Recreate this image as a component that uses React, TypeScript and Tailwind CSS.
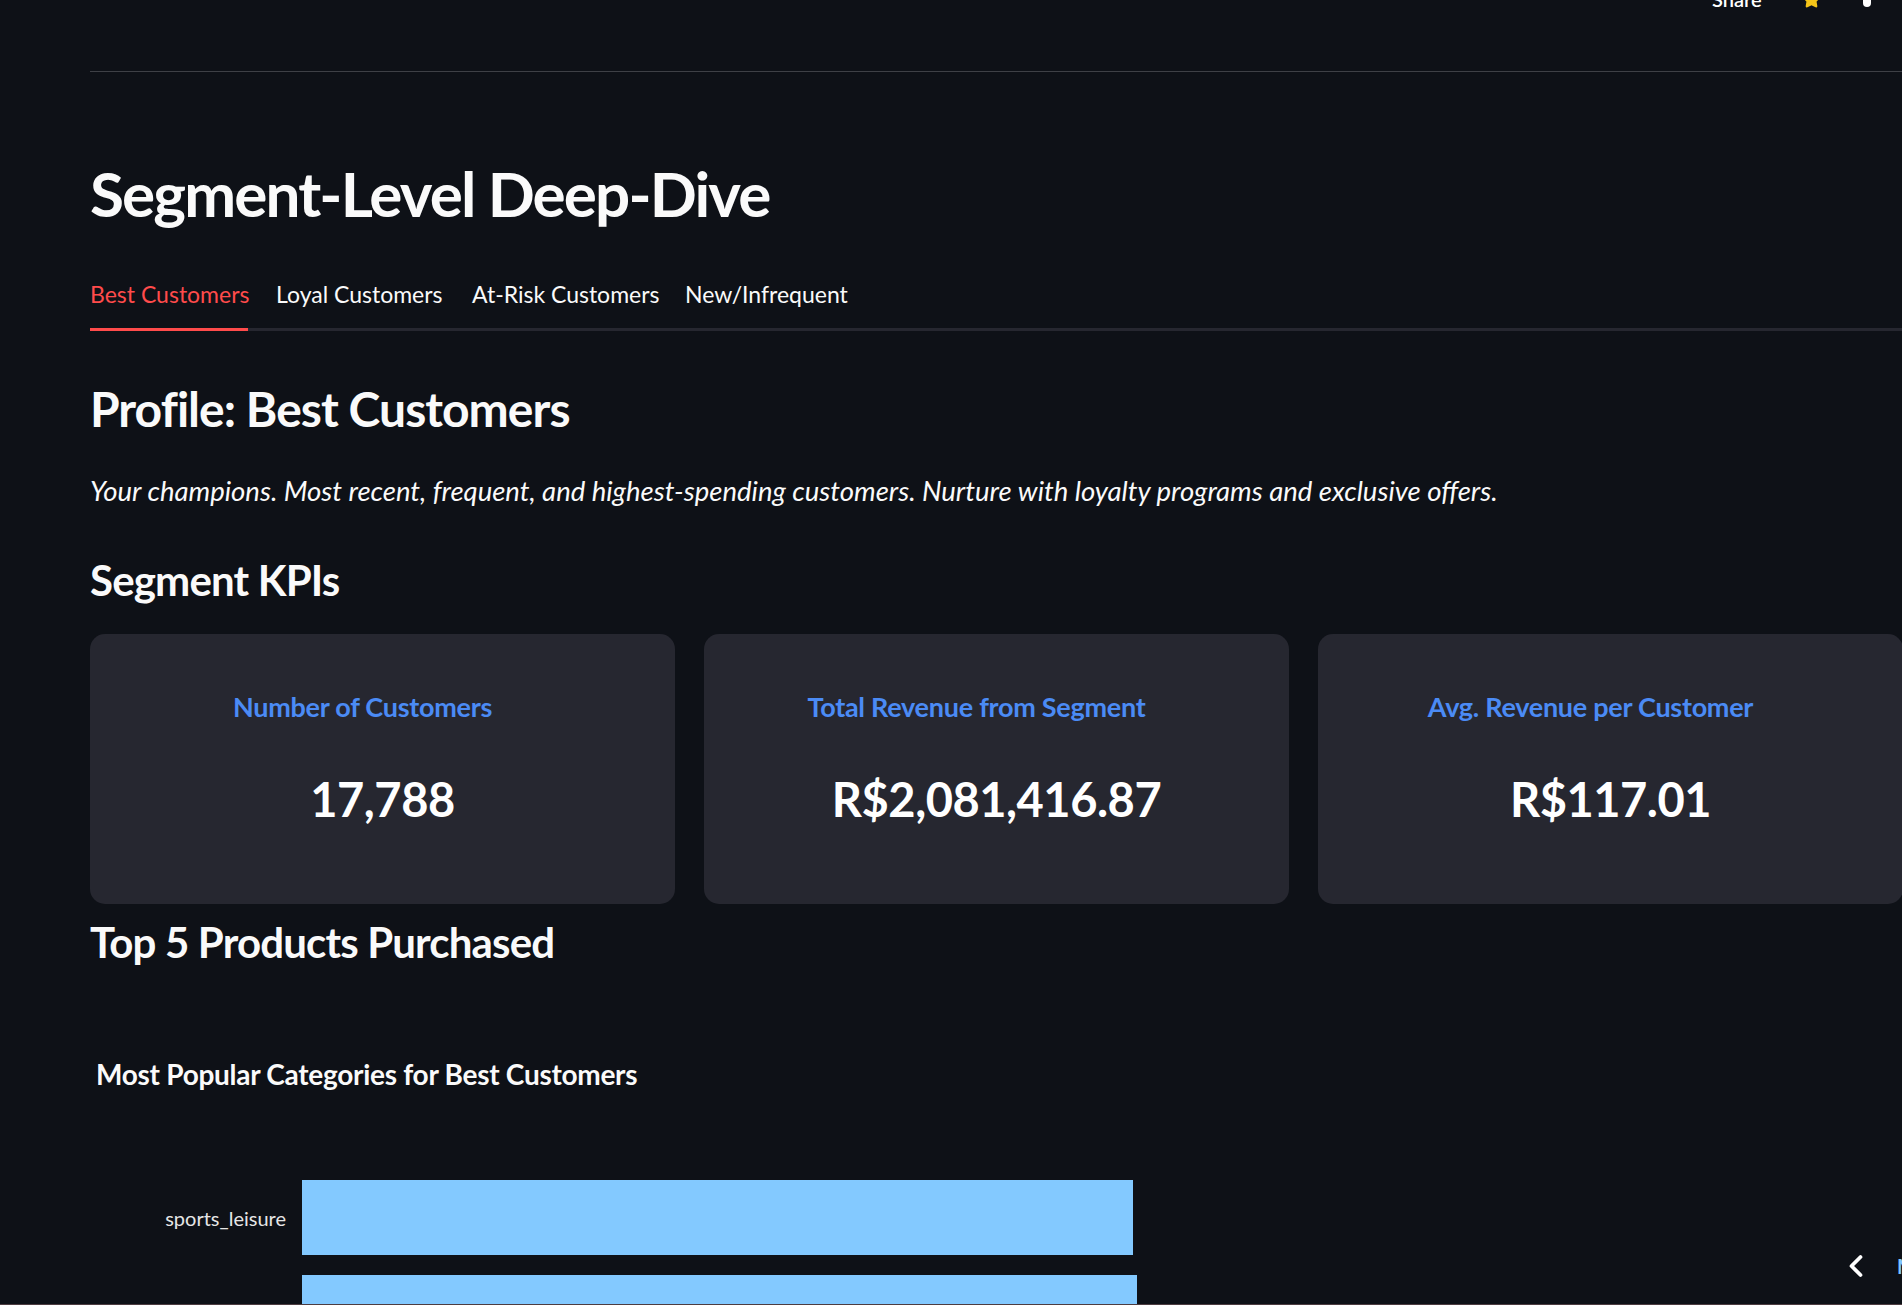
import { ChevronLeft, Star } from "lucide-react"

const tabs = [
	{ label: "Best Customers", w: "w-[157px]" },
	{ label: "Loyal Customers", w: "w-[167px]" },
	{ label: "At-Risk Customers", w: "w-[184px]" },
	{ label: "New/Infrequent", w: "w-[162px]" }
]

const kpis = [
	{ label: "Number of Customers", value: "17,788" },
	{ label: "Total Revenue from Segment", value: "R$2,081,416.87" },
	{ label: "Avg. Revenue per Customer", value: "R$117.01" }
]

const bars = [
	{ name: "sports_leisure", w: "w-[831px]" },
	{ name: "", w: "w-[835px]" }
]

function KpiCard({ label, value }: { label: string; value: string }) {
	return (
		<div className="h-[270px] w-[585px] shrink-0 rounded-[15px] bg-[#262730] flex flex-col items-center">
			<div className="mt-[56px] pr-[40px] text-[27px] leading-[34px] font-bold text-[#4b8bf5] tracking-[-0.01em]">
				{label}
			</div>
			<div className="mt-[45px] text-[47px] leading-[60px] font-bold text-white tracking-[-0.01em]">{value}</div>
		</div>
	)
}

export default function App() {
	return (
		<div className="relative w-[1902px] h-[1305px] overflow-hidden bg-[#0e1117] text-[#fafafa] font-['Lato',sans-serif]">
			{/* toolbar, scrolled mostly out of view */}
			<div className="absolute -top-[16px] left-[1712px] flex items-center">
				<span className="text-[20px] font-semibold text-white">Share</span>
				<Star size={19} className="ml-[40px] text-[#f5c518] fill-[#f5c518]" />
				<span className="ml-[42px] h-[16px] w-[8px] rounded-sm bg-white" />
			</div>

			<div className="w-[1813px] ml-[90px] flex flex-col">
				<div className="mt-[71px] h-px bg-[#3e4046]" />

				<h1 className="mt-[86px] text-[62px] leading-[70px] font-bold tracking-[-0.03em] text-[#fafafa]">
					Segment-Level Deep-Dive
				</h1>

				<div className="mt-[51px] relative">
					<div className="flex">
						{tabs.map((t, i) => (
							<div
								key={t.label}
								className={`${t.w} ${i > 0 ? "ml-[29px]" : ""} h-[49px] text-[23px] leading-[30px] whitespace-nowrap ${i === 0 ? "text-[#ff4b4b]" : "text-[#fafafa]"}`}
							>
								{t.label}
							</div>
						))}
					</div>
					<div className="h-[3px] bg-[#262730] relative">
						<div className="absolute left-0 top-0 h-[3px] w-[158px] bg-[#ff4b4b]" />
					</div>
				</div>

				<h2 className="mt-[48px] text-[48px] leading-[60px] font-bold tracking-[-0.02em]">
					Profile: Best Customers
				</h2>

				<p className="mt-[34px] text-[27.5px] leading-[36px] italic text-[#fafafa]">
					Your champions. Most recent, frequent, and highest-spending customers. Nurture with loyalty programs and exclusive offers.
				</p>

				<h3 className="mt-[46px] text-[42px] leading-[50px] font-bold tracking-[-0.02em]">Segment KPIs</h3>

				<div className="mt-[29px] flex gap-[29px]">
					{kpis.map(k => (
						<KpiCard key={k.label} label={k.label} value={k.value} />
					))}
				</div>

				<h3 className="mt-[13px] text-[42px] leading-[50px] font-bold tracking-[-0.02em]">
					Top 5 Products Purchased
				</h3>

				<div className="mt-[90px] ml-[6px] text-[28px] leading-[34px] font-bold tracking-[-0.01em]">
					Most Popular Categories for Best Customers
				</div>

				<div className="mt-[89px] flex flex-col gap-[20px]">
					{bars.map((b, i) => (
						<div key={i} className="flex items-center">
							<div className="w-[212px] pr-[16px] text-right text-[20px] text-[#e6e6e6]">{b.name}</div>
							<div className={`${b.w} h-[75px] bg-[#83c9ff]`} />
						</div>
					))}
				</div>
			</div>

			<div className="absolute left-[1838px] top-[1248px] flex items-center">
				<ChevronLeft size={36} strokeWidth={2.5} className="text-white" />
				<span className="ml-[23px] text-[20px] font-bold text-[#7fc4ff]">M</span>
			</div>
			<div className="absolute left-0 bottom-0 h-px w-full bg-[#4d3c41]" />
		</div>
	)
}
